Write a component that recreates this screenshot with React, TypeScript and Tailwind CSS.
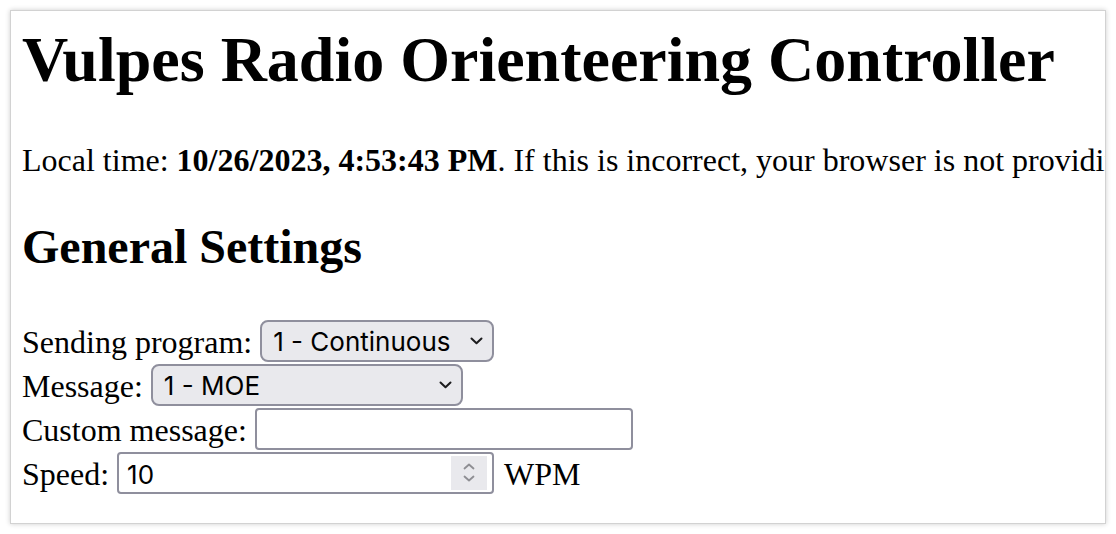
import { useState } from 'react';

const serif = "font-['Liberation_Serif','Times_New_Roman',serif]";
const ui = "font-['Inter','Helvetica_Neue',Arial,sans-serif]";

const programs = ['1 - Continuous', '2 - Timed', '3 - Foxoring'];
const messages = ['1 - MOE', '2 - MOI', '3 - MOS', '4 - MOH', '5 - MO5'];

const Chevron = () => (
  <svg
    className="pointer-events-none absolute right-[11px] top-1/2 -translate-y-1/2"
    width="13"
    height="8"
    viewBox="0 0 13 8"
    fill="none"
  >
    <path d="M1.5 1.5 6.5 6.3 11.5 1.5" stroke="#1c1c1e" strokeWidth="2" strokeLinecap="round" strokeLinejoin="round" />
  </svg>
);

const Select = ({
  options,
  width,
  value,
  onChange,
}: {
  options: string[];
  width: string;
  value: string;
  onChange: (v: string) => void;
}) => (
  <span className={`relative inline-block ${width}`}>
    <select
      value={value}
      onChange={(e) => onChange(e.target.value)}
      className={`${ui} h-[42px] w-full appearance-none rounded-[8px] border-2 border-[#8f8f9d] bg-[#e9e9ed] pl-[11px] pr-8 pt-[3px] text-[26px] leading-none text-black outline-none`}
    >
      {options.map((o) => (
        <option key={o}>{o}</option>
      ))}
    </select>
    <Chevron />
  </span>
);

export default function App() {
  const [program, setProgram] = useState(programs[0]);
  const [message, setMessage] = useState(messages[0]);
  const [custom, setCustom] = useState('');
  const [speed, setSpeed] = useState('10');

  return (
    <div className="h-[534px] w-[1116px] bg-white p-[10px]">
      <div
        className={`${serif} h-[514px] overflow-hidden border border-[#d2d2d2] bg-white pl-[11px] text-black shadow-[0_0_5px_rgba(0,0,0,0.2)]`}
      >
        <h1 className="mt-[12px] whitespace-nowrap text-[64px] font-bold leading-[73.5px]">
          Vulpes Radio Orienteering Controller
        </h1>

        {/* the sentence runs past the frame on purpose, as in the page */}
        <p className="mt-[45px] whitespace-nowrap text-[32px] leading-[37px]">
          Local time: <b>10/26/2023, 4:53:43 PM</b>. If this is incorrect, your browser is not providing the correct
          time.
        </p>

        <h2 className="mt-[40px] whitespace-nowrap text-[48px] font-bold leading-[55px]">General Settings</h2>

        <form className="mt-[45px] text-[32px] leading-[37px]" onSubmit={(e) => e.preventDefault()}>
          <div className="flex h-[44px] items-center gap-[8px]">
            <label className="pt-[4px]">Sending program:</label>
            <Select options={programs} width="w-[234px]" value={program} onChange={setProgram} />
          </div>

          <div className="flex h-[44px] items-center gap-[8px]">
            <label className="pt-[4px]">Message:</label>
            <Select options={messages} width="w-[312px]" value={message} onChange={setMessage} />
          </div>

          <div className="flex h-[44px] items-center gap-[8px]">
            <label className="pt-[4px]">Custom message:</label>
            <input
              type="text"
              value={custom}
              onChange={(e) => setCustom(e.target.value)}
              className={`${ui} h-[42px] w-[378px] rounded-[4px] border-2 border-[#8f8f9d] bg-white px-[8px] text-[26px] outline-none`}
            />
          </div>

          <div className="flex h-[44px] items-center gap-[8px]">
            <label className="pt-[4px]">Speed:</label>
            <span className="relative inline-block">
              <input
                type="text"
                inputMode="numeric"
                value={speed}
                onChange={(e) => setSpeed(e.target.value)}
                className={`${ui} h-[42px] w-[377px] rounded-[4px] border-2 border-[#8f8f9d] bg-white pl-[8px] pr-[44px] pt-[3px] text-[26px] outline-none`}
              />
              <span className="pointer-events-none absolute right-[7px] top-[4px] flex h-[34px] w-[36px] flex-col items-center justify-center gap-[5px] bg-[#e9e9ed]">
                <svg width="12" height="7" viewBox="0 0 12 7" fill="none">
                  <path d="M1.5 5.5 6 1.5 10.5 5.5" stroke="#8e8e93" strokeWidth="1.8" strokeLinecap="round" strokeLinejoin="round" />
                </svg>
                <svg width="12" height="7" viewBox="0 0 12 7" fill="none">
                  <path d="M1.5 1.5 6 5.5 10.5 1.5" stroke="#8e8e93" strokeWidth="1.8" strokeLinecap="round" strokeLinejoin="round" />
                </svg>
              </span>
            </span>
            <span className="ml-[2px] pt-[4px]">WPM</span>
          </div>
        </form>
      </div>
    </div>
  );
}
